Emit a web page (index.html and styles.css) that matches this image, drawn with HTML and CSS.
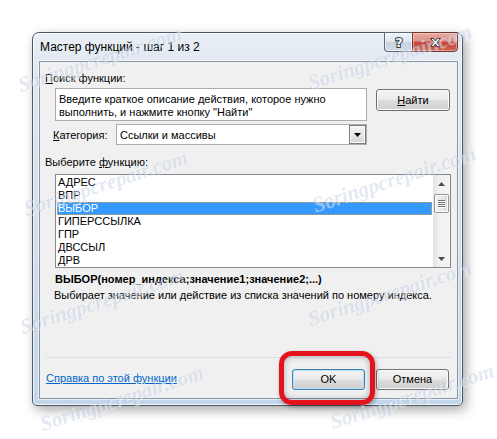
FILE: index.html
```html
<!DOCTYPE html>
<html lang="ru">
<head>
<meta charset="utf-8">
<title>Мастер функций - шаг 1 из 2</title>
<link rel="stylesheet" href="styles.css">
</head>
<body>
<div class="stage">
  <div class="window">
    <div class="titlebar">
      <span class="title">Мастер функций - шаг 1 из 2</span>
      <div class="caption-buttons">
        <div class="cap-btn cap-help">
          <svg width="12" height="14" viewBox="0 0 12 14"><text x="6" y="12" text-anchor="middle" class="help-glyph">?</text></svg>
        </div>
        <div class="cap-btn cap-close">
          <svg width="13" height="11" viewBox="0 0 13 11"><path d="M1.5 1.5H4.5L6.5 4L8.5 1.5H11.5L8 5.5L11.5 9.5H8.5L6.5 7L4.5 9.5H1.5L5 5.5Z" fill="#fff" stroke="#333a44" stroke-width="1" stroke-linejoin="round"/></svg>
        </div>
      </div>
    </div>
    <div class="client">
      <div class="label label-search"><u>П</u>оиск функции:</div>
      <div class="search-row">
        <div class="search-box">Введите краткое описание действия, которое нужно<br>выполнить, и нажмите кнопку "Найти"</div>
        <div class="btn btn-find"><span><u>Н</u>айти</span></div>
      </div>
      <div class="category-row">
        <span class="cat-label"><u>К</u>атегория:</span>
        <div class="combo">
          <span class="combo-text">Ссылки и массивы</span>
          <div class="combo-btn"><svg width="7" height="4" viewBox="0 0 7 4"><path d="M0 0H7L3.5 4Z" fill="#000"/></svg></div>
        </div>
      </div>
      <div class="label label-choose">Выберите <u>ф</u>ункцию:</div>
      <div class="listbox">
        <ul class="items">
          <li>АДРЕС</li>
          <li>ВПР</li>
          <li class="sel">ВЫБОР</li>
          <li>ГИПЕРССЫЛКА</li>
          <li>ГПР</li>
          <li>ДВССЫЛ</li>
          <li>ДРВ</li>
        </ul>
        <div class="scrollbar">
          <div class="sb-arrow"><svg width="7" height="4" viewBox="0 0 7 4"><path d="M3.5 0L7 4H0Z" fill="#4d4d4d"/></svg></div>
          <div class="sb-track">
            <div class="sb-thumb"><span></span><span></span><span></span><span></span></div>
          </div>
          <div class="sb-arrow"><svg width="7" height="4" viewBox="0 0 7 4"><path d="M0 0H7L3.5 4Z" fill="#4d4d4d"/></svg></div>
        </div>
      </div>
      <div class="syntax">ВЫБОР(номер_индекса;значение1;значение2;...)</div>
      <div class="desc">Выбирает значение или действие из списка значений по номеру индекса.</div>
      <div class="separator"></div>
      <div class="footer">
        <a class="help-link">Справка по этой функции</a>
        <div class="btn btn-ok"><span>OK</span></div>
        <div class="btn btn-cancel"><span>Отмена</span></div>
      </div>
    </div>
  </div>
  <div class="highlight-ring"></div>
  <div class="watermarks">
    <span class="wm wm1">Soringpcrepair.com</span>
    <span class="wm wm2">Soringpcrepair.com</span>
    <span class="wm wm3">Soringpcrepair.com</span>
    <span class="wm wm4">Soringpcrepair.com</span>
    <span class="wm wm5">Soringpcrepair.com</span>
    <span class="wm wm6">Soringpcrepair.com</span>
    <span class="wm wm7">Soringpcrepair.com</span>
    <span class="wm wm8">Soringpcrepair.com</span>
  </div>
</div>
</body>
</html>
```

FILE: styles.css
```css
* { box-sizing: border-box; }
html, body { margin: 0; padding: 0; }
body {
  background: #ffffff;
  font-family: "Liberation Sans", Arial, sans-serif;
  font-size: 11px;
  color: #000;
  width: 497px;
  height: 439px;
  overflow: hidden;
}
.stage {
  position: relative;
  width: 497px;
  height: 439px;
  padding: 32px 0 0 32px;
}
.window {
  width: 431px;
  height: 374px;
  border: 1px solid #4b5867;
  border-radius: 7px 7px 5px 5px;
  padding: 0 4px 6px 6px;
  background: linear-gradient(180deg, #eaeff5 0%, #dfe7f0 10%, #d5e0ec 45%, #c3d6ea 100%);
  box-shadow: 3px 4px 12px rgba(0, 0, 0, 0.35), inset 0 0 0 1px rgba(255, 255, 255, 0.75);
  display: flex;
  flex-direction: column;
}
.titlebar {
  height: 28px;
  display: flex;
  align-items: flex-start;
}
.title {
  font-size: 12px;
  line-height: 16px;
  margin-top: 6px;
  padding-left: 1px;
  color: #000;
}
.caption-buttons {
  margin-left: auto;
  margin-top: -1px;
  display: flex;
}
.cap-btn {
  height: 20px;
  border: 1px solid #5a6a7b;
  display: flex;
  align-items: center;
  justify-content: center;
}
.cap-help {
  width: 28px;
  border-right: none;
  border-radius: 0 0 0 4px;
  background: linear-gradient(180deg, #f0f4f8 0%, #e0e7ef 48%, #c7d2de 52%, #d3dde8 100%);
  box-shadow: inset 0 0 0 1px rgba(255, 255, 255, 0.6);
}
.cap-close {
  width: 46px;
  border-radius: 0 0 4px 0;
  border-color: #6b3a33;
  background: linear-gradient(180deg, #e9aca2 0%, #dc8e80 45%, #c4463a 52%, #d0604f 100%);
  box-shadow: inset 0 0 0 1px rgba(255, 220, 210, 0.5);
}
.help-glyph {
  font-family: "DejaVu Sans", sans-serif;
  font-weight: bold;
  font-size: 13px;
  fill: #ffffff;
  stroke: #2f3b48;
  stroke-width: 2px;
  paint-order: stroke;
}
.client {
  flex: 1;
  border: 1px solid #8795a4;
  background: #f0f0f0;
  padding: 0 6px;
  display: flex;
  flex-direction: column;
  box-shadow: 0 0 0 1px rgba(255, 255, 255, 0.6);
}
.label { line-height: 14px; }
.label-search { margin-top: 9px; margin-left: -1px; }
.search-row {
  display: flex;
  align-items: flex-start;
  margin-top: 3px;
  margin-left: 9px;
}
.search-box {
  width: 312px;
  height: 33px;
  background: #fff;
  border: 1px solid #a9adb4;
  padding: 4px 3px 0;
  line-height: 13px;
  white-space: nowrap;
}
.btn {
  border: 1px solid #707070;
  border-radius: 3px;
  background: linear-gradient(180deg, #f2f2f2 0%, #ebebeb 48%, #dddddd 52%, #cfcfcf 100%);
  box-shadow: inset 0 0 0 1px #fbfbfb;
  display: flex;
  align-items: center;
  justify-content: center;
  line-height: 13px;
}
.btn-find {
  margin-left: 9px;
  margin-top: 1px;
  width: 74px;
  height: 22px;
}
.category-row {
  display: flex;
  align-items: center;
  margin-top: 3px;
}
.cat-label {
  margin-left: 7px;
  width: 63px;
  line-height: 14px;
}
.combo {
  width: 251px;
  height: 21px;
  border: 1px solid #a9adb4;
  background: #fff;
  display: flex;
  align-items: center;
  padding-left: 3px;
}
.combo-btn {
  margin-left: auto;
  width: 17px;
  height: 19px;
  border: 1px solid #7a7a7a;
  background: linear-gradient(180deg, #f4f4f4 0%, #e6e6e6 50%, #d2d2d2 100%);
  box-shadow: inset 0 0 0 1px #fafafa;
  display: flex;
  align-items: center;
  justify-content: center;
}
.label-choose { margin-top: 10px; margin-left: -1px; }
.listbox {
  margin-top: 5px;
  margin-left: 9px;
  width: 396px;
  height: 94px;
  border: 1px solid #828790;
  background: #fff;
  display: flex;
}
.items {
  list-style: none;
  margin: 0;
  padding: 1px;
  flex: 1;
}
.items li {
  height: 13px;
  line-height: 13px;
  padding-left: 1px;
}
.items li.sel {
  background: #3399ff;
  color: #fff;
  outline: 1px dotted #e0a040;
  outline-offset: -1px;
}
.scrollbar {
  width: 17px;
  display: flex;
  flex-direction: column;
  background: linear-gradient(90deg, #e3e3e3 0%, #f2f2f2 40%, #f2f2f2 100%);
}
.sb-arrow {
  height: 17px;
  display: flex;
  align-items: center;
  justify-content: center;
}
.sb-track { flex: 1; }
.sb-thumb {
  margin: 2px 1px 0 1px;
  height: 19px;
  border: 1px solid #979797;
  border-radius: 2px;
  background: linear-gradient(90deg, #f3f3f3 0%, #e8e8e8 50%, #d9d9d9 100%);
  box-shadow: inset 0 0 0 1px #fcfcfc;
  display: flex;
  flex-direction: column;
  align-items: center;
  justify-content: center;
  gap: 1px;
}
.sb-thumb span {
  width: 7px;
  height: 1px;
  background: #6f6f6f;
  box-shadow: 0 1px 0 #ffffff;
}
.syntax {
  margin-top: 4px;
  margin-left: 9px;
  font-weight: bold;
  line-height: 14px;
}
.desc {
  margin-top: 2px;
  margin-left: 8px;
  line-height: 14px;
}
.separator {
  margin-top: 55px;
  height: 1px;
  background: #d5dfe5;
}
.footer {
  margin-top: 11px;
  display: flex;
  align-items: flex-start;
  padding-right: 2px;
}
.help-link {
  margin-top: 2px;
  line-height: 14px;
  color: #0066cc;
  text-decoration: underline;
}
.btn-ok {
  margin-left: auto;
  width: 73px;
  height: 21px;
  border-color: #3c7fb1;
  box-shadow: inset 0 0 0 1px #b5e2f8;
}
.btn-cancel {
  margin-left: 11px;
  width: 73px;
  height: 21px;
}
.highlight-ring {
  position: absolute;
  left: 279px;
  top: 351px;
  width: 96px;
  height: 54px;
  border: 5px solid #e4121c;
  border-radius: 13px;
  box-shadow: 1px 2px 4px rgba(0, 0, 0, 0.35), inset 0 0 6px rgba(0, 0, 0, 0.3);
}
.watermarks {
  position: absolute;
  left: 0;
  top: 0;
  width: 497px;
  height: 439px;
  pointer-events: none;
  overflow: hidden;
}
.wm {
  position: absolute;
  font-family: "Liberation Serif", serif;
  font-style: italic;
  font-weight: bold;
  font-size: 21px;
  line-height: 21px;
  white-space: nowrap;
  color: rgba(160, 178, 215, 0.3);
  text-shadow: 1px 1px 0 rgba(255, 255, 255, 0.45);
  transform-origin: 0 100%;
  transform: rotate(-18deg);
}
.wm1 { left: 22px; top: 75px; }
.wm2 { left: 312px; top: 73px; }
.wm3 { left: 28px; top: 199px; }
.wm4 { left: 316px; top: 195px; }
.wm5 { left: 24px; top: 317px; }
.wm6 { left: 312px; top: 309px; }
.wm7 { left: 44px; top: 414px; }
.wm8 { left: 334px; top: 412px; }
```
